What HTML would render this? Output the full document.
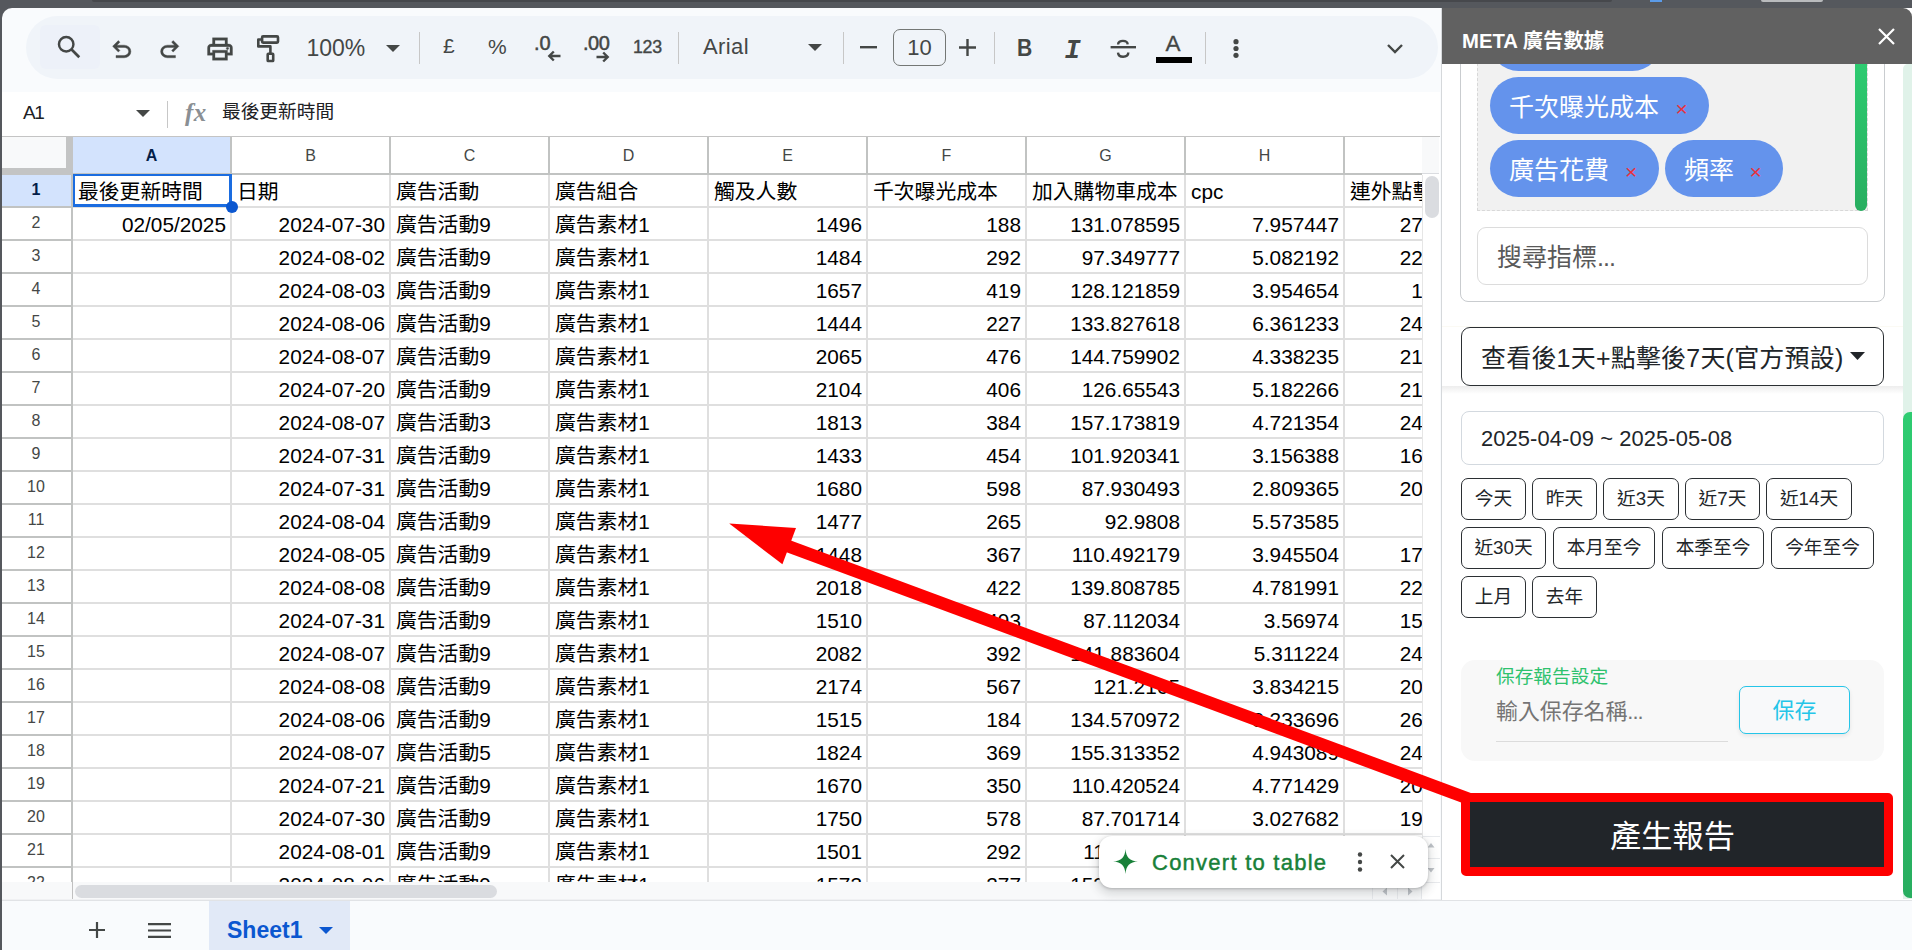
<!DOCTYPE html>
<html lang="zh-Hant">
<head>
<meta charset="utf-8">
<title>META 廣告數據 - Google Sheets</title>
<style>
*{box-sizing:border-box;margin:0;padding:0}
html,body{width:1912px;height:950px;overflow:hidden}
body{position:relative;background:#55585d;font-family:"Liberation Sans","Noto Sans CJK TC",sans-serif;color:#444746}
.abs{position:absolute}
/* ---------- app window ---------- */
#win{position:absolute;left:2px;top:8px;width:1910px;height:942px;background:#f9fbfd;border-top-left-radius:10px}
#topstrip1{position:absolute;left:92px;top:0;width:1520px;height:2px;background:#46484c;border-bottom-left-radius:3px;border-bottom-right-radius:3px}
#topstrip2{position:absolute;left:1650px;top:0;width:12px;height:2px;background:#5b9be8}
#topstrip3{position:absolute;left:1761px;top:0;width:62px;height:2px;background:#b9bbbd;border-radius:0 0 2px 2px}
/* ---------- toolbar ---------- */
#tb{position:absolute;left:26px;top:16px;width:1412px;height:63px;border-radius:32px;background:#f0f4f9}
#tb .hov{position:absolute;left:14px;top:9px;width:60px;height:44px;border-radius:6px;background:#edf1f9}
#tb svg{position:absolute;overflow:visible}
#tb .t{position:absolute;font-size:22px;line-height:26px;color:#444746;white-space:nowrap}
#tb .sep{position:absolute;top:16px;width:1px;height:32px;background:#c7c7c7}
#tb .fs{position:absolute;left:867px;top:13px;width:53px;height:37px;border:1px solid #747775;border-radius:7px;text-align:center;font-size:22px;line-height:36px;color:#444746}
/* ---------- formula bar ---------- */
#fb{position:absolute;left:2px;top:92px;width:1438px;height:44px;background:#fff}
#fb .name{position:absolute;left:21px;top:8px;font-size:19px;line-height:26px;color:#202124;letter-spacing:-1.300px}
#fb .sep{position:absolute;left:165px;top:9px;width:1px;height:27px;background:#c7c7c7}
#fb .val{position:absolute;left:220px;top:7px;font-size:18.7px;line-height:26px;color:#202124;white-space:nowrap}
/* ---------- grid ---------- */
#grid{position:absolute;left:2px;top:136px;width:1420px;height:746px;background:#fff;overflow:hidden}
#grid .topline{position:absolute;left:0;top:0;width:1420px;height:1px;background:#c4c4c4;z-index:3}
#grid .ch{position:absolute;top:1px;height:38px;line-height:38px;text-align:center;font-size:16px;color:#444746;background:#fff;border-bottom:2px solid #c1c3c2}
#grid .ch.sel{background:#d3e3fd;color:#041e49;font-weight:bold}
#grid .rh{position:absolute;left:0;width:70px;padding-right:2px;text-align:center;font-size:16px;color:#444746;background:#fff}
#grid .rh.sel{background:#d3e3fd;color:#041e49;font-weight:bold}
#grid .c{position:absolute;font-size:20.8px;color:#000;white-space:nowrap;overflow:hidden;padding:1px 5px 0 5px}
#grid .c.n{text-align:right;padding:1px 4px 0 5px}
#grid .vl{position:absolute;top:39px;width:2px;height:720px;background:#dfdfdf;margin-left:-1px}
#grid .vlh{position:absolute;top:0;width:2px;height:39px;background:#c1c3c2;margin-left:-1px}
#grid .hl{position:absolute;left:71px;width:1360px;height:2px;background:#dfdfdf;margin-top:-1px}
#grid .hlh{position:absolute;left:0;width:71px;height:2px;background:#c1c3c2;margin-top:-1px}
/* ---------- sidebar ---------- */
#sb{position:absolute;left:1441px;top:8px;width:471px;height:892px;background:#fff;border-left:1px solid #d5d8db;overflow:hidden;font-family:"Liberation Sans","Noto Sans CJK TC",sans-serif;color:#212529}
#sb .hd{position:absolute;left:0;top:0;width:470px;height:56px;background:#616161;border-top-right-radius:9px;z-index:5}
#sb .hd .ttl{position:absolute;left:20px;top:19px;font-size:20.300px;line-height:28px;font-weight:bold;color:#fff;white-space:nowrap}
#sb .card{position:absolute;left:18px;top:-40px;width:425px;height:334px;border:1px solid #c9cccf;border-radius:8px;background:#fff}
#sb .box{position:absolute;left:35px;top:-30px;width:391px;height:233px;background:#f1f1f1;border:1px dashed #d8d8d8}
#sb .chip{position:absolute;height:57px;border-radius:29px;background:#6493ec;color:#fff;font-size:25px;line-height:61px;padding-left:19px;white-space:nowrap;overflow:hidden}
#sb .chip i{position:absolute;top:0;font-style:normal;color:#e8323c;font-size:21px;line-height:63px}
#sb .gsb{position:absolute;left:413px;top:50px;width:12px;height:153px;border-radius:0 0 6px 6px;background:linear-gradient(#2ecc71,#28ae60)}
#sb .srch{position:absolute;left:35px;top:219px;width:391px;height:58px;border:1px solid #dcdcdc;border-radius:9px;background:#fff;font-size:25px;line-height:58px;padding-left:19px;color:#595959}
#sb .dd{position:absolute;left:19px;top:319px;width:423px;height:59px;border:1px solid #2b2f33;border-radius:9px;background:#fff;font-size:25px;line-height:60px;padding-left:19px;letter-spacing:0.200px;color:#212529;white-space:nowrap}
#sb .ddsh{position:absolute;left:0;top:378px;width:461px;height:8px;background:linear-gradient(#ededed,#fff)}
#sb .date{position:absolute;left:19px;top:403px;width:423px;height:54px;border:1px solid #d3d9df;border-radius:8px;background:#fff;font-size:21.900px;line-height:54px;padding-left:19px;letter-spacing:0.100px;color:#212529;white-space:nowrap}
#sb .qb{position:absolute;height:42px;border:1px solid #2b2f33;border-radius:7px;background:#fff;font-size:18.700px;line-height:40px;text-align:center;color:#212529;white-space:nowrap}
#sb .save{position:absolute;left:19px;top:652px;width:423px;height:101px;border-radius:14px;background:#f8f8f8}
#sb .save .lb{position:absolute;left:35px;top:3px;font-size:18.700px;line-height:28px;color:#2ec26e;white-space:nowrap}
#sb .save .ph{position:absolute;left:35px;top:36px;font-size:21.900px;line-height:32px;color:#757575;white-space:nowrap}
#sb .save .ul{position:absolute;left:35px;top:81px;width:232px;height:1px;background:#dcdcdc}
#sb .save .btn{position:absolute;left:278px;top:26px;width:111px;height:48px;border:1px solid #25c5e8;border-radius:7px;background:#f8f9fa;color:#25c5e8;font-size:21.900px;line-height:48px;text-align:center;box-shadow:0 2px 4px rgba(0,0,0,.08)}
#sb .gen{position:absolute;left:19px;top:785px;width:432px;height:83px;background:#212529;border:9px solid #fe0000;border-radius:5px;color:#fff;font-size:31.200px;line-height:70px;text-align:center;padding-right:9px}
#sb .osb{position:absolute;left:461px;top:56px;width:10px;height:835px;background:#e0f2e9;border-top-left-radius:5px}
#sb .osbt{position:absolute;left:461px;top:404px;width:12px;height:486px;background:linear-gradient(#2ecc71,#28ae60);border-radius:7px 0 0 7px}

.dots{letter-spacing:-1px}

</style>
</head>
<body>

<div id="topstrip1"></div><div id="topstrip2"></div><div id="topstrip3"></div>
<div id="win"></div>
<div id="tb">
  <div class="hov"></div>
  <!-- search -->
  <svg style="left:29px;top:17px" width="28" height="28" viewBox="0 0 24 24"><circle cx="9.600" cy="9.600" r="6.200" fill="none" stroke="#444746" stroke-width="2.100"/><path d="M14.200 14.200L20.800 20.800" stroke="#444746" stroke-width="2.300" fill="none"/></svg>
  <!-- undo -->
  <svg style="left:81.800px;top:20.400px" width="27.500" height="27.500" viewBox="0 -960 960 960"><path fill="#444746" stroke="#444746" stroke-width="14" d="M280-200v-80h284q63 0 109.500-40T720-420q0-60-46.500-100T564-560H312l104 104-56 56-200-200 200-200 56 56-104 104h252q97 0 166.500 63T800-420q0 94-69.500 157T564-200H280Z"/></svg>
  <!-- redo -->
  <svg style="left:130.400px;top:20.400px" width="27.500" height="27.500" viewBox="0 -960 960 960"><path fill="#444746" stroke="#444746" stroke-width="14" d="M396-200q-97 0-166.500-63T160-420q0-94 69.500-157T396-640h252L544-744l56-56 200 200-200 200-56-56 104-104H396q-63 0-109.500 40T240-420q0 60 46.500 100T396-280h284v80H396Z"/></svg>
  <!-- print -->
  <svg style="left:178.500px;top:18.100px" width="30" height="30" viewBox="0 -960 960 960"><path fill="#444746" stroke="#444746" stroke-width="10" d="M640-640v-120H320v120h-80v-200h480v200h-80Zm-480 80h640-640Zm560 100q17 0 28.500-11.500T760-500q0-17-11.500-28.500T720-540q-17 0-28.500 11.500T680-500q0 17 11.500 28.500T720-460Zm-80 260v-160H320v160h320Zm80 80H240v-160H80v-240q0-51 35-85.500t85-34.500h560q51 0 85.500 34.500T880-520v240H720v160Zm80-240v-160q0-17-11.500-28.500T760-560H200q-17 0-28.500 11.500T160-520v160h80v-80h480v80h80Z"/></svg>
  <!-- paint format -->
  <svg style="left:229px;top:17px" width="30" height="31" viewBox="0 0 30 31" fill="none" stroke="#444746" stroke-width="2.600" stroke-linejoin="round"><rect x="7.100" y="3.400" width="15.900" height="6.200" rx="1"/><path d="M7.100 6.500H3.300V13.400H15.400V20.500"/><rect x="12.700" y="20.800" width="5.500" height="7.200" rx="0.600"/></svg>
  <div class="t" style="left:280.500px;top:19px;font-size:23px">100%</div>
  <svg style="left:360px;top:29px" width="14" height="7" viewBox="0 0 14 7"><path d="M0 0h14l-7 7z" fill="#444746"/></svg>
  <div class="sep" style="left:393px"></div>
  <div class="t" style="left:417px;top:17px;font-size:21px">£</div>
  <div class="t" style="left:462px;top:18px;font-size:21px">%</div>
  <!-- decrease decimal -->
  <div class="t" style="left:508px;top:14px;font-size:20px;-webkit-text-stroke:0.500px #444746">.0</div>
  <svg style="left:521px;top:34px" width="14" height="12" viewBox="0 0 14 12"><path d="M13.500 6H2.500M6.800 1.500L2.300 6L6.800 10.500" fill="none" stroke="#444746" stroke-width="2.400"/></svg>
  <!-- increase decimal -->
  <div class="t" style="left:557px;top:14px;font-size:20px;-webkit-text-stroke:0.500px #444746;letter-spacing:-0.500px">.00</div>
  <svg style="left:570px;top:35px" width="14" height="12" viewBox="0 0 14 12"><path d="M0.500 6H11.500M7.200 1.500L11.700 6L7.200 10.500" fill="none" stroke="#444746" stroke-width="2.400"/></svg>
  <div class="t" style="left:607px;top:17.500px;font-size:17.800px;letter-spacing:-0.300px;-webkit-text-stroke:0.400px #444746">123</div>
  <div class="sep" style="left:652px"></div>
  <div class="t" style="left:677px;top:18px;letter-spacing:0.400px">Arial</div>
  <svg style="left:782px;top:28px" width="14" height="7" viewBox="0 0 14 7"><path d="M0 0h14l-7 7z" fill="#444746"/></svg>
  <div class="sep" style="left:817px"></div>
  <svg style="left:834px;top:30px" width="17" height="3" viewBox="0 0 17 3"><rect width="17" height="2.400" fill="#444746"/></svg>
  <div class="fs">10</div>
  <svg style="left:933px;top:23px" width="17" height="17" viewBox="0 0 17 17"><path d="M0 8.500H17M8.500 0V17" stroke="#444746" stroke-width="2.400" fill="none"/></svg>
  <div class="sep" style="left:968px"></div>
  <div class="t" style="left:989.500px;top:19.300px;font-size:24px;font-weight:bold;transform:scaleX(0.880)">B</div>
  <div class="t" style="left:1038.500px;top:21.600px;font-size:27px;font-weight:bold;font-style:italic;font-family:'Liberation Mono',monospace">I</div>
  <!-- strikethrough -->
  <svg style="left:1083px;top:19px" width="28" height="26" viewBox="0 0 28 26"><path d="M18.700 9.400C18.500 7.200 16.700 5.900 13.900 5.900C11.200 5.900 9.100 7.200 9.100 9.400M9 17.600C9.200 20.200 11.100 21.700 14.100 21.700C17.100 21.700 19.300 20.300 19.300 17.600" fill="none" stroke="#444746" stroke-width="2.400"/><rect x="1.600" y="11" width="25.400" height="2.400" fill="#444746"/></svg>
  <div class="t" style="left:1139.500px;top:14px;font-size:22.500px;line-height:28px;-webkit-text-stroke:0.300px #444746">A</div>
  <div class="abs" style="left:1130px;top:41px;width:36px;height:6px;background:#000"></div>
  <div class="sep" style="left:1179px"></div>
  <svg style="left:1205.500px;top:22.800px" width="8" height="20" viewBox="0 0 8 20"><circle cx="4" cy="2.700" r="2.600" fill="#444746"/><circle cx="4" cy="9.500" r="2.600" fill="#444746"/><circle cx="4" cy="16.300" r="2.600" fill="#444746"/></svg>
  <svg style="left:1361px;top:28px" width="16" height="10" viewBox="0 0 16 10"><path d="M1 1L8 8L15 1" fill="none" stroke="#444746" stroke-width="2.400"/></svg>
</div>
<div id="fb">
  <div class="name">A1</div>
  <svg class="abs" style="left:133.500px;top:18px" width="14" height="7" viewBox="0 0 14 7"><path d="M0 0h14l-7 7z" fill="#444746"/></svg>
  <div class="sep"></div>
  <div class="abs" style="left:183px;top:5.500px;font-family:'Liberation Serif',serif;font-style:italic;font-weight:bold;font-size:25px;line-height:30px;color:#8a8f94;letter-spacing:0.300px">fx</div>
  <div class="val">最後更新時間</div>
</div>

<div id="grid">
<div class="ch sel" style="left:70px;width:159px">A</div>
<div class="ch" style="left:229px;width:159px">B</div>
<div class="ch" style="left:388px;width:159px">C</div>
<div class="ch" style="left:547px;width:159px">D</div>
<div class="ch" style="left:706px;width:159px">E</div>
<div class="ch" style="left:865px;width:159px">F</div>
<div class="ch" style="left:1024px;width:159px">G</div>
<div class="ch" style="left:1183px;width:159px">H</div>
<div class="ch" style="left:1342px;width:159px">I</div>
<div class="rh sel" style="top:39px;height:31px;line-height:30px">1</div>
<div class="c" style="left:71px;top:39px;width:157px;height:31px;line-height:31px">最後更新時間</div>
<div class="c" style="left:230px;top:39px;width:157px;height:31px;line-height:31px">日期</div>
<div class="c" style="left:389px;top:39px;width:157px;height:31px;line-height:31px">廣告活動</div>
<div class="c" style="left:548px;top:39px;width:157px;height:31px;line-height:31px">廣告組合</div>
<div class="c" style="left:707px;top:39px;width:157px;height:31px;line-height:31px">觸及人數</div>
<div class="c" style="left:866px;top:39px;width:157px;height:31px;line-height:31px">千次曝光成本</div>
<div class="c" style="left:1025px;top:39px;width:157px;height:31px;line-height:31px">加入購物車成本</div>
<div class="c" style="left:1184px;top:39px;width:157px;height:31px;line-height:31px">cpc</div>
<div class="c" style="left:1343px;top:39px;width:157px;height:31px;line-height:31px">連外點擊成本</div>
<div class="rh" style="top:72px;height:31px;line-height:30px">2</div>
<div class="c n" style="left:71px;top:72px;width:157px;height:31px;line-height:31px">02/05/2025</div>
<div class="c n" style="left:230px;top:72px;width:157px;height:31px;line-height:31px">2024-07-30</div>
<div class="c" style="left:389px;top:72px;width:157px;height:31px;line-height:31px">廣告活動9</div>
<div class="c" style="left:548px;top:72px;width:157px;height:31px;line-height:31px">廣告素材1</div>
<div class="c n" style="left:707px;top:72px;width:157px;height:31px;line-height:31px">1496</div>
<div class="c n" style="left:866px;top:72px;width:157px;height:31px;line-height:31px">188</div>
<div class="c n" style="left:1025px;top:72px;width:157px;height:31px;line-height:31px">131.078595</div>
<div class="c n" style="left:1184px;top:72px;width:157px;height:31px;line-height:31px">7.957447</div>
<div class="c n" style="left:1343px;top:72px;width:157px;height:31px;line-height:31px">27.340426</div>
<div class="rh" style="top:105px;height:31px;line-height:30px">3</div>
<div class="c n" style="left:230px;top:105px;width:157px;height:31px;line-height:31px">2024-08-02</div>
<div class="c" style="left:389px;top:105px;width:157px;height:31px;line-height:31px">廣告活動9</div>
<div class="c" style="left:548px;top:105px;width:157px;height:31px;line-height:31px">廣告素材1</div>
<div class="c n" style="left:707px;top:105px;width:157px;height:31px;line-height:31px">1484</div>
<div class="c n" style="left:866px;top:105px;width:157px;height:31px;line-height:31px">292</div>
<div class="c n" style="left:1025px;top:105px;width:157px;height:31px;line-height:31px">97.349777</div>
<div class="c n" style="left:1184px;top:105px;width:157px;height:31px;line-height:31px">5.082192</div>
<div class="c n" style="left:1343px;top:105px;width:157px;height:31px;line-height:31px">22.833333</div>
<div class="rh" style="top:138px;height:31px;line-height:30px">4</div>
<div class="c n" style="left:230px;top:138px;width:157px;height:31px;line-height:31px">2024-08-03</div>
<div class="c" style="left:389px;top:138px;width:157px;height:31px;line-height:31px">廣告活動9</div>
<div class="c" style="left:548px;top:138px;width:157px;height:31px;line-height:31px">廣告素材1</div>
<div class="c n" style="left:707px;top:138px;width:157px;height:31px;line-height:31px">1657</div>
<div class="c n" style="left:866px;top:138px;width:157px;height:31px;line-height:31px">419</div>
<div class="c n" style="left:1025px;top:138px;width:157px;height:31px;line-height:31px">128.121859</div>
<div class="c n" style="left:1184px;top:138px;width:157px;height:31px;line-height:31px">3.954654</div>
<div class="c n" style="left:1343px;top:138px;width:157px;height:31px;line-height:31px">18.63124</div>
<div class="rh" style="top:171px;height:31px;line-height:30px">5</div>
<div class="c n" style="left:230px;top:171px;width:157px;height:31px;line-height:31px">2024-08-06</div>
<div class="c" style="left:389px;top:171px;width:157px;height:31px;line-height:31px">廣告活動9</div>
<div class="c" style="left:548px;top:171px;width:157px;height:31px;line-height:31px">廣告素材1</div>
<div class="c n" style="left:707px;top:171px;width:157px;height:31px;line-height:31px">1444</div>
<div class="c n" style="left:866px;top:171px;width:157px;height:31px;line-height:31px">227</div>
<div class="c n" style="left:1025px;top:171px;width:157px;height:31px;line-height:31px">133.827618</div>
<div class="c n" style="left:1184px;top:171px;width:157px;height:31px;line-height:31px">6.361233</div>
<div class="c n" style="left:1343px;top:171px;width:157px;height:31px;line-height:31px">24.066667</div>
<div class="rh" style="top:204px;height:31px;line-height:30px">6</div>
<div class="c n" style="left:230px;top:204px;width:157px;height:31px;line-height:31px">2024-08-07</div>
<div class="c" style="left:389px;top:204px;width:157px;height:31px;line-height:31px">廣告活動9</div>
<div class="c" style="left:548px;top:204px;width:157px;height:31px;line-height:31px">廣告素材1</div>
<div class="c n" style="left:707px;top:204px;width:157px;height:31px;line-height:31px">2065</div>
<div class="c n" style="left:866px;top:204px;width:157px;height:31px;line-height:31px">476</div>
<div class="c n" style="left:1025px;top:204px;width:157px;height:31px;line-height:31px">144.759902</div>
<div class="c n" style="left:1184px;top:204px;width:157px;height:31px;line-height:31px">4.338235</div>
<div class="c n" style="left:1343px;top:204px;width:157px;height:31px;line-height:31px">21.070175</div>
<div class="rh" style="top:237px;height:31px;line-height:30px">7</div>
<div class="c n" style="left:230px;top:237px;width:157px;height:31px;line-height:31px">2024-07-20</div>
<div class="c" style="left:389px;top:237px;width:157px;height:31px;line-height:31px">廣告活動9</div>
<div class="c" style="left:548px;top:237px;width:157px;height:31px;line-height:31px">廣告素材1</div>
<div class="c n" style="left:707px;top:237px;width:157px;height:31px;line-height:31px">2104</div>
<div class="c n" style="left:866px;top:237px;width:157px;height:31px;line-height:31px">406</div>
<div class="c n" style="left:1025px;top:237px;width:157px;height:31px;line-height:31px">126.65543</div>
<div class="c n" style="left:1184px;top:237px;width:157px;height:31px;line-height:31px">5.182266</div>
<div class="c n" style="left:1343px;top:237px;width:157px;height:31px;line-height:31px">21.914894</div>
<div class="rh" style="top:270px;height:31px;line-height:30px">8</div>
<div class="c n" style="left:230px;top:270px;width:157px;height:31px;line-height:31px">2024-08-07</div>
<div class="c" style="left:389px;top:270px;width:157px;height:31px;line-height:31px">廣告活動3</div>
<div class="c" style="left:548px;top:270px;width:157px;height:31px;line-height:31px">廣告素材1</div>
<div class="c n" style="left:707px;top:270px;width:157px;height:31px;line-height:31px">1813</div>
<div class="c n" style="left:866px;top:270px;width:157px;height:31px;line-height:31px">384</div>
<div class="c n" style="left:1025px;top:270px;width:157px;height:31px;line-height:31px">157.173819</div>
<div class="c n" style="left:1184px;top:270px;width:157px;height:31px;line-height:31px">4.721354</div>
<div class="c n" style="left:1343px;top:270px;width:157px;height:31px;line-height:31px">24.508197</div>
<div class="rh" style="top:303px;height:31px;line-height:30px">9</div>
<div class="c n" style="left:230px;top:303px;width:157px;height:31px;line-height:31px">2024-07-31</div>
<div class="c" style="left:389px;top:303px;width:157px;height:31px;line-height:31px">廣告活動9</div>
<div class="c" style="left:548px;top:303px;width:157px;height:31px;line-height:31px">廣告素材1</div>
<div class="c n" style="left:707px;top:303px;width:157px;height:31px;line-height:31px">1433</div>
<div class="c n" style="left:866px;top:303px;width:157px;height:31px;line-height:31px">454</div>
<div class="c n" style="left:1025px;top:303px;width:157px;height:31px;line-height:31px">101.920341</div>
<div class="c n" style="left:1184px;top:303px;width:157px;height:31px;line-height:31px">3.156388</div>
<div class="c n" style="left:1343px;top:303px;width:157px;height:31px;line-height:31px">16.436782</div>
<div class="rh" style="top:336px;height:31px;line-height:30px">10</div>
<div class="c n" style="left:230px;top:336px;width:157px;height:31px;line-height:31px">2024-07-31</div>
<div class="c" style="left:389px;top:336px;width:157px;height:31px;line-height:31px">廣告活動9</div>
<div class="c" style="left:548px;top:336px;width:157px;height:31px;line-height:31px">廣告素材1</div>
<div class="c n" style="left:707px;top:336px;width:157px;height:31px;line-height:31px">1680</div>
<div class="c n" style="left:866px;top:336px;width:157px;height:31px;line-height:31px">598</div>
<div class="c n" style="left:1025px;top:336px;width:157px;height:31px;line-height:31px">87.930493</div>
<div class="c n" style="left:1184px;top:336px;width:157px;height:31px;line-height:31px">2.809365</div>
<div class="c n" style="left:1343px;top:336px;width:157px;height:31px;line-height:31px">20.487805</div>
<div class="rh" style="top:369px;height:31px;line-height:30px">11</div>
<div class="c n" style="left:230px;top:369px;width:157px;height:31px;line-height:31px">2024-08-04</div>
<div class="c" style="left:389px;top:369px;width:157px;height:31px;line-height:31px">廣告活動9</div>
<div class="c" style="left:548px;top:369px;width:157px;height:31px;line-height:31px">廣告素材1</div>
<div class="c n" style="left:707px;top:369px;width:157px;height:31px;line-height:31px">1477</div>
<div class="c n" style="left:866px;top:369px;width:157px;height:31px;line-height:31px">265</div>
<div class="c n" style="left:1025px;top:369px;width:157px;height:31px;line-height:31px">92.9808</div>
<div class="c n" style="left:1184px;top:369px;width:157px;height:31px;line-height:31px">5.573585</div>
<div class="rh" style="top:402px;height:31px;line-height:30px">12</div>
<div class="c n" style="left:230px;top:402px;width:157px;height:31px;line-height:31px">2024-08-05</div>
<div class="c" style="left:389px;top:402px;width:157px;height:31px;line-height:31px">廣告活動9</div>
<div class="c" style="left:548px;top:402px;width:157px;height:31px;line-height:31px">廣告素材1</div>
<div class="c n" style="left:707px;top:402px;width:157px;height:31px;line-height:31px">1448</div>
<div class="c n" style="left:866px;top:402px;width:157px;height:31px;line-height:31px">367</div>
<div class="c n" style="left:1025px;top:402px;width:157px;height:31px;line-height:31px">110.492179</div>
<div class="c n" style="left:1184px;top:402px;width:157px;height:31px;line-height:31px">3.945504</div>
<div class="c n" style="left:1343px;top:402px;width:157px;height:31px;line-height:31px">17.235294</div>
<div class="rh" style="top:435px;height:31px;line-height:30px">13</div>
<div class="c n" style="left:230px;top:435px;width:157px;height:31px;line-height:31px">2024-08-08</div>
<div class="c" style="left:389px;top:435px;width:157px;height:31px;line-height:31px">廣告活動9</div>
<div class="c" style="left:548px;top:435px;width:157px;height:31px;line-height:31px">廣告素材1</div>
<div class="c n" style="left:707px;top:435px;width:157px;height:31px;line-height:31px">2018</div>
<div class="c n" style="left:866px;top:435px;width:157px;height:31px;line-height:31px">422</div>
<div class="c n" style="left:1025px;top:435px;width:157px;height:31px;line-height:31px">139.808785</div>
<div class="c n" style="left:1184px;top:435px;width:157px;height:31px;line-height:31px">4.781991</div>
<div class="c n" style="left:1343px;top:435px;width:157px;height:31px;line-height:31px">22.422222</div>
<div class="rh" style="top:468px;height:31px;line-height:30px">14</div>
<div class="c n" style="left:230px;top:468px;width:157px;height:31px;line-height:31px">2024-07-31</div>
<div class="c" style="left:389px;top:468px;width:157px;height:31px;line-height:31px">廣告活動9</div>
<div class="c" style="left:548px;top:468px;width:157px;height:31px;line-height:31px">廣告素材1</div>
<div class="c n" style="left:707px;top:468px;width:157px;height:31px;line-height:31px">1510</div>
<div class="c n" style="left:866px;top:468px;width:157px;height:31px;line-height:31px">493</div>
<div class="c n" style="left:1025px;top:468px;width:157px;height:31px;line-height:31px">87.112034</div>
<div class="c n" style="left:1184px;top:468px;width:157px;height:31px;line-height:31px">3.56974</div>
<div class="c n" style="left:1343px;top:468px;width:157px;height:31px;line-height:31px">15.243243</div>
<div class="rh" style="top:501px;height:31px;line-height:30px">15</div>
<div class="c n" style="left:230px;top:501px;width:157px;height:31px;line-height:31px">2024-08-07</div>
<div class="c" style="left:389px;top:501px;width:157px;height:31px;line-height:31px">廣告活動9</div>
<div class="c" style="left:548px;top:501px;width:157px;height:31px;line-height:31px">廣告素材1</div>
<div class="c n" style="left:707px;top:501px;width:157px;height:31px;line-height:31px">2082</div>
<div class="c n" style="left:866px;top:501px;width:157px;height:31px;line-height:31px">392</div>
<div class="c n" style="left:1025px;top:501px;width:157px;height:31px;line-height:31px">141.883604</div>
<div class="c n" style="left:1184px;top:501px;width:157px;height:31px;line-height:31px">5.311224</div>
<div class="c n" style="left:1343px;top:501px;width:157px;height:31px;line-height:31px">24.785714</div>
<div class="rh" style="top:534px;height:31px;line-height:30px">16</div>
<div class="c n" style="left:230px;top:534px;width:157px;height:31px;line-height:31px">2024-08-08</div>
<div class="c" style="left:389px;top:534px;width:157px;height:31px;line-height:31px">廣告活動9</div>
<div class="c" style="left:548px;top:534px;width:157px;height:31px;line-height:31px">廣告素材1</div>
<div class="c n" style="left:707px;top:534px;width:157px;height:31px;line-height:31px">2174</div>
<div class="c n" style="left:866px;top:534px;width:157px;height:31px;line-height:31px">567</div>
<div class="c n" style="left:1025px;top:534px;width:157px;height:31px;line-height:31px">121.2165</div>
<div class="c n" style="left:1184px;top:534px;width:157px;height:31px;line-height:31px">3.834215</div>
<div class="c n" style="left:1343px;top:534px;width:157px;height:31px;line-height:31px">20.320755</div>
<div class="rh" style="top:567px;height:31px;line-height:30px">17</div>
<div class="c n" style="left:230px;top:567px;width:157px;height:31px;line-height:31px">2024-08-06</div>
<div class="c" style="left:389px;top:567px;width:157px;height:31px;line-height:31px">廣告活動9</div>
<div class="c" style="left:548px;top:567px;width:157px;height:31px;line-height:31px">廣告素材1</div>
<div class="c n" style="left:707px;top:567px;width:157px;height:31px;line-height:31px">1515</div>
<div class="c n" style="left:866px;top:567px;width:157px;height:31px;line-height:31px">184</div>
<div class="c n" style="left:1025px;top:567px;width:157px;height:31px;line-height:31px">134.570972</div>
<div class="c n" style="left:1184px;top:567px;width:157px;height:31px;line-height:31px">8.233696</div>
<div class="c n" style="left:1343px;top:567px;width:157px;height:31px;line-height:31px">26.578947</div>
<div class="rh" style="top:600px;height:31px;line-height:30px">18</div>
<div class="c n" style="left:230px;top:600px;width:157px;height:31px;line-height:31px">2024-08-07</div>
<div class="c" style="left:389px;top:600px;width:157px;height:31px;line-height:31px">廣告活動5</div>
<div class="c" style="left:548px;top:600px;width:157px;height:31px;line-height:31px">廣告素材1</div>
<div class="c n" style="left:707px;top:600px;width:157px;height:31px;line-height:31px">1824</div>
<div class="c n" style="left:866px;top:600px;width:157px;height:31px;line-height:31px">369</div>
<div class="c n" style="left:1025px;top:600px;width:157px;height:31px;line-height:31px">155.313352</div>
<div class="c n" style="left:1184px;top:600px;width:157px;height:31px;line-height:31px">4.943089</div>
<div class="c n" style="left:1343px;top:600px;width:157px;height:31px;line-height:31px">24.320001</div>
<div class="rh" style="top:633px;height:31px;line-height:30px">19</div>
<div class="c n" style="left:230px;top:633px;width:157px;height:31px;line-height:31px">2024-07-21</div>
<div class="c" style="left:389px;top:633px;width:157px;height:31px;line-height:31px">廣告活動9</div>
<div class="c" style="left:548px;top:633px;width:157px;height:31px;line-height:31px">廣告素材1</div>
<div class="c n" style="left:707px;top:633px;width:157px;height:31px;line-height:31px">1670</div>
<div class="c n" style="left:866px;top:633px;width:157px;height:31px;line-height:31px">350</div>
<div class="c n" style="left:1025px;top:633px;width:157px;height:31px;line-height:31px">110.420524</div>
<div class="c n" style="left:1184px;top:633px;width:157px;height:31px;line-height:31px">4.771429</div>
<div class="c n" style="left:1343px;top:633px;width:157px;height:31px;line-height:31px">20.875001</div>
<div class="rh" style="top:666px;height:31px;line-height:30px">20</div>
<div class="c n" style="left:230px;top:666px;width:157px;height:31px;line-height:31px">2024-07-30</div>
<div class="c" style="left:389px;top:666px;width:157px;height:31px;line-height:31px">廣告活動9</div>
<div class="c" style="left:548px;top:666px;width:157px;height:31px;line-height:31px">廣告素材1</div>
<div class="c n" style="left:707px;top:666px;width:157px;height:31px;line-height:31px">1750</div>
<div class="c n" style="left:866px;top:666px;width:157px;height:31px;line-height:31px">578</div>
<div class="c n" style="left:1025px;top:666px;width:157px;height:31px;line-height:31px">87.701714</div>
<div class="c n" style="left:1184px;top:666px;width:157px;height:31px;line-height:31px">3.027682</div>
<div class="c n" style="left:1343px;top:666px;width:157px;height:31px;line-height:31px">19.444444</div>
<div class="rh" style="top:699px;height:31px;line-height:30px">21</div>
<div class="c n" style="left:230px;top:699px;width:157px;height:31px;line-height:31px">2024-08-01</div>
<div class="c" style="left:389px;top:699px;width:157px;height:31px;line-height:31px">廣告活動9</div>
<div class="c" style="left:548px;top:699px;width:157px;height:31px;line-height:31px">廣告素材1</div>
<div class="c n" style="left:707px;top:699px;width:157px;height:31px;line-height:31px">1501</div>
<div class="c n" style="left:866px;top:699px;width:157px;height:31px;line-height:31px">292</div>
<div class="c n" style="left:1025px;top:699px;width:157px;height:31px;line-height:31px">110.31446</div>
<div class="c n" style="left:1184px;top:699px;width:157px;height:31px;line-height:31px">5.140411</div>
<div class="c n" style="left:1343px;top:699px;width:157px;height:31px;line-height:31px">21.442857</div>
<div class="rh" style="top:732px;height:31px;line-height:30px">22</div>
<div class="c n" style="left:230px;top:732px;width:157px;height:31px;line-height:31px">2024-08-06</div>
<div class="c" style="left:389px;top:732px;width:157px;height:31px;line-height:31px">廣告活動9</div>
<div class="c" style="left:548px;top:732px;width:157px;height:31px;line-height:31px">廣告素材1</div>
<div class="c n" style="left:707px;top:732px;width:157px;height:31px;line-height:31px">1573</div>
<div class="c n" style="left:866px;top:732px;width:157px;height:31px;line-height:31px">277</div>
<div class="c n" style="left:1025px;top:732px;width:157px;height:31px;line-height:31px">153.760832</div>
<div class="c n" style="left:1184px;top:732px;width:157px;height:31px;line-height:31px">4.261538</div>
<div class="c n" style="left:1343px;top:732px;width:157px;height:31px;line-height:31px">23.083333</div>
<div class="vl" style="left:229px"></div>
<div class="vlh" style="left:229px"></div>
<div class="vl" style="left:388px"></div>
<div class="vlh" style="left:388px"></div>
<div class="vl" style="left:547px"></div>
<div class="vlh" style="left:547px"></div>
<div class="vl" style="left:706px"></div>
<div class="vlh" style="left:706px"></div>
<div class="vl" style="left:865px"></div>
<div class="vlh" style="left:865px"></div>
<div class="vl" style="left:1024px"></div>
<div class="vlh" style="left:1024px"></div>
<div class="vl" style="left:1183px"></div>
<div class="vlh" style="left:1183px"></div>
<div class="vl" style="left:1342px"></div>
<div class="vlh" style="left:1342px"></div>
<div class="hl" style="top:71px"></div>
<div class="hlh" style="top:71px"></div>
<div class="hl" style="top:104px"></div>
<div class="hlh" style="top:104px"></div>
<div class="hl" style="top:137px"></div>
<div class="hlh" style="top:137px"></div>
<div class="hl" style="top:170px"></div>
<div class="hlh" style="top:170px"></div>
<div class="hl" style="top:203px"></div>
<div class="hlh" style="top:203px"></div>
<div class="hl" style="top:236px"></div>
<div class="hlh" style="top:236px"></div>
<div class="hl" style="top:269px"></div>
<div class="hlh" style="top:269px"></div>
<div class="hl" style="top:302px"></div>
<div class="hlh" style="top:302px"></div>
<div class="hl" style="top:335px"></div>
<div class="hlh" style="top:335px"></div>
<div class="hl" style="top:368px"></div>
<div class="hlh" style="top:368px"></div>
<div class="hl" style="top:401px"></div>
<div class="hlh" style="top:401px"></div>
<div class="hl" style="top:434px"></div>
<div class="hlh" style="top:434px"></div>
<div class="hl" style="top:467px"></div>
<div class="hlh" style="top:467px"></div>
<div class="hl" style="top:500px"></div>
<div class="hlh" style="top:500px"></div>
<div class="hl" style="top:533px"></div>
<div class="hlh" style="top:533px"></div>
<div class="hl" style="top:566px"></div>
<div class="hlh" style="top:566px"></div>
<div class="hl" style="top:599px"></div>
<div class="hlh" style="top:599px"></div>
<div class="hl" style="top:632px"></div>
<div class="hlh" style="top:632px"></div>
<div class="hl" style="top:665px"></div>
<div class="hlh" style="top:665px"></div>
<div class="hl" style="top:698px"></div>
<div class="hlh" style="top:698px"></div>
<div class="hl" style="top:731px"></div>
<div class="hlh" style="top:731px"></div>
<div class="hl" style="top:764px"></div>
<div class="hlh" style="top:764px"></div>
<div class="topline"></div>
<div class="abs" style="left:0;top:1px;width:64px;height:31px;background:#f8f9fa;z-index:2"></div>
<div class="abs" style="left:64px;top:1px;width:7px;height:38px;background:#c3c4c4;z-index:2"></div>
<div class="abs" style="left:0;top:32px;width:71px;height:7px;background:#c3c4c4;z-index:2"></div>
<div class="abs" style="left:69px;top:39px;width:2px;height:720px;background:#c1c3c2;z-index:2"></div>
<div class="abs" style="left:71px;top:38px;width:159px;height:33px;border:2px solid #1a6ce0;border-right-width:3px;border-bottom-width:3px;z-index:4"></div>
<div class="abs" style="left:223.500px;top:64.500px;width:12px;height:12px;border-radius:50%;background:#0b57d0;z-index:5"></div>

</div>
<!-- right scroll area of grid -->
<div class="abs" style="left:1422px;top:136px;width:18px;height:764px;background:#fff"></div>
<div class="abs" style="left:1422px;top:136px;width:18px;height:1px;background:#c4c4c4"></div>
<div class="abs" style="left:1422px;top:137px;width:17px;height:36px;background:#f8f9fa"></div>
<div class="abs" style="left:1422px;top:175px;width:1px;height:707px;background:#e6e6e6"></div>
<div class="abs" style="left:1422px;top:173px;width:17px;height:1px;background:#dadce0"></div>
<div class="abs" style="left:1425px;top:176px;width:14px;height:42px;border-radius:7px;background:#dadce0"></div>
<!-- horizontal scroll area -->
<div class="abs" style="left:2px;top:882px;width:1420px;height:17px;background:#f8f9fa"></div>
<div class="abs" style="left:3px;top:882px;width:69px;height:17px;background:#f8f9fa"></div>
<div class="abs" style="left:72px;top:882px;width:1px;height:17px;background:#c0c0c0"></div>
<div class="abs" style="left:75px;top:885px;width:422px;height:13px;border-radius:7px;background:#dadce0"></div>
<div class="abs" style="left:2px;top:899px;width:1910px;height:1px;background:#f0f1f3"></div>
<div class="abs" style="left:2px;top:900px;width:1910px;height:1px;background:#e1e3e6"></div>
<!-- scroll arrows -->
<svg class="abs" style="left:1422px;top:836px" width="18" height="64" viewBox="0 0 18 64"><path d="M5.500 11.500L9 7L12.500 11.500Z M5.500 32L9 36.500L12.500 32Z" fill="#bdc1c6"/><rect x="0" y="0" width="18" height="1" fill="#e8eaed"/><rect x="0" y="22" width="18" height="1" fill="#e8eaed"/><rect x="0" y="46" width="18" height="1" fill="#e8eaed"/></svg>
<svg class="abs" style="left:1372px;top:883px" width="50" height="16" viewBox="0 0 50 16"><rect x="0" y="0" width="1" height="16" fill="#e8eaed"/><rect x="25" y="0" width="1" height="16" fill="#e8eaed"/><rect x="49" y="0" width="1" height="16" fill="#e8eaed"/><path d="M15 4.500L10.500 8.500L15 12.500Z M36 4.500L40.500 8.500L36 12.500Z" fill="#bdc1c6"/></svg>
<!-- sheet tabs -->
<div class="abs" style="left:209px;top:901px;width:141px;height:49px;background:#e1e9f7"></div>
<svg class="abs" style="left:89px;top:922px" width="16" height="16" viewBox="0 0 16 16"><path d="M0 8H16M8 0V16" stroke="#444746" stroke-width="2.200" fill="none"/></svg>
<svg class="abs" style="left:148px;top:923px" width="23" height="15" viewBox="0 0 23 15"><path d="M0 1.200H23M0 7.500H23M0 13.800H23" stroke="#444746" stroke-width="2.200" fill="none"/></svg>
<div class="abs" style="left:227px;top:916px;font-size:23px;line-height:28px;font-weight:bold;color:#0b57d0">Sheet1</div>
<svg class="abs" style="left:319px;top:927px" width="14" height="7" viewBox="0 0 14 7"><path d="M0 0h14l-7 7z" fill="#0b57d0"/></svg>

<div id="sb">
  <div class="card"></div>
  <div class="box"></div>
  <div class="chip" style="left:48px;top:6px;width:171px;height:57px"></div>
  <div class="chip" style="left:48px;top:69px;width:219px">千次曝光成本<i style="left:185.500px">×</i></div>
  <div class="chip" style="left:48px;top:132px;width:169px">廣告花費<i style="left:135px">×</i></div>
  <div class="chip" style="left:223px;top:132px;width:118px">頻率<i style="left:84.500px">×</i></div>
  <div class="gsb"></div>
  <div class="srch">搜尋指標<span class="dots">...</span></div>
  <div class="dd">查看後1天+點擊後7天(官方預設)<svg style="position:absolute;left:388px;top:24px" width="15" height="8" viewBox="0 0 15 8"><path d="M0 0h15l-7.500 8z" fill="#212529"/></svg></div>
  <div class="ddsh"></div>
  <div style="position:absolute;left:0;top:318px;width:461px;height:1px;background:#fbfaf4"></div>
  <div class="date">2025-04-09 ~ 2025-05-08</div>
  <div class="qb" style="left:19px;top:470px;width:65px">今天</div>
  <div class="qb" style="left:90px;top:470px;width:65px">昨天</div>
  <div class="qb" style="left:161px;top:470px;width:76px">近3天</div>
  <div class="qb" style="left:243px;top:470px;width:75px">近7天</div>
  <div class="qb" style="left:324px;top:470px;width:86px">近14天</div>
  <div class="qb" style="left:19px;top:519px;width:85px">近30天</div>
  <div class="qb" style="left:111px;top:519px;width:102px">本月至今</div>
  <div class="qb" style="left:220px;top:519px;width:102px">本季至今</div>
  <div class="qb" style="left:329px;top:519px;width:103px">今年至今</div>
  <div class="qb" style="left:19px;top:568px;width:65px">上月</div>
  <div class="qb" style="left:90px;top:568px;width:65px">去年</div>
  <div class="save">
    <div class="lb">保存報告設定</div>
    <div class="ph">輸入保存名稱<span class="dots">...</span></div>
    <div class="ul"></div>
    <div class="btn">保存</div>
  </div>
  <div class="gen">產生報告</div>
  <div class="osb"></div>
  <div class="osbt"></div>
  <div class="hd"><div class="ttl">META 廣告數據</div>
    <svg style="position:absolute;left:436px;top:20px" width="17" height="17" viewBox="0 0 17 17"><path d="M1 1L16 16M16 1L1 16" stroke="#fff" stroke-width="2.200" fill="none"/></svg>
  </div>
</div>

<!-- convert to table popup -->
<div class="abs" style="left:1099px;top:836px;width:329px;height:52px;border-radius:13px;background:#fff;box-shadow:0 1px 3px rgba(60,64,67,.3),0 4px 8px 3px rgba(60,64,67,.15)">
  <svg class="abs" style="left:14px;top:13px" width="25" height="25" viewBox="0 0 24 24"><path d="M12 0C12.600 8 16 11.400 24 12C16 12.600 12.600 16 12 24C11.400 16 8 12.600 0 12C8 11.400 11.400 8 12 0Z" fill="#188038"/></svg>
  <div class="abs" style="left:53px;top:12px;font-size:22px;line-height:30px;color:#188038;white-space:nowrap;letter-spacing:1.250px;-webkit-text-stroke:0.450px #188038">Convert to table</div>
  <svg class="abs" style="left:258px;top:16px" width="6" height="20" viewBox="0 0 6 20"><circle cx="3" cy="2.500" r="2.200" fill="#444746"/><circle cx="3" cy="10" r="2.200" fill="#444746"/><circle cx="3" cy="17.500" r="2.200" fill="#444746"/></svg>
  <svg class="abs" style="left:291px;top:18px" width="15" height="15" viewBox="0 0 15 15"><path d="M1 1L14 14M14 1L1 14" stroke="#444746" stroke-width="2" fill="none"/></svg>
</div>
<!-- annotation arrow -->
<svg class="abs" style="left:0;top:0;z-index:50" width="1912" height="950" viewBox="0 0 1912 950"><path d="M786 545.400L1470 799.200" stroke="#fe0000" stroke-width="12.400" fill="none"/><path d="M729.200 523.600L796 527.900L782.400 564.200Z" fill="#fe0000"/></svg>


</body>
</html>
